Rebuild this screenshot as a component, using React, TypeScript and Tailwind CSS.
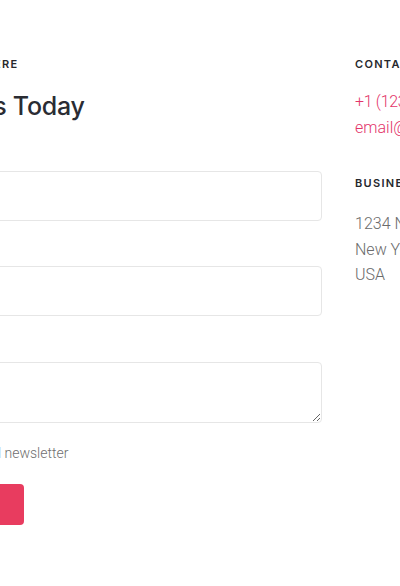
import React from "react";

export default function App() {
  const body = { fontFamily: 'Roboto, "Noto Sans", sans-serif' };
  const head = { fontFamily: 'Inter, "DejaVu Sans", sans-serif' };
  return (
    <div className="w-[400px] h-[586px] overflow-hidden bg-white" style={body}>
      <div className="flex ml-[-262px] pt-[57px] gap-[33px] w-[1000px]">
        {/* Left column */}
        <div className="w-[584px] shrink-0 flex flex-col">
          <div className="pl-[142px]">
            <div className="text-[11px] font-semibold tracking-[0.12em] text-[#26282d] leading-[14px]" style={head}>
              WE'RE ALWAYS HERE
            </div>
            <h2 className="mt-[20px] ml-[-4px] text-[25px] font-medium tracking-[-0.01em] text-[#2a2c33] leading-[30px]" style={head}>
              Contact Us Today
            </h2>
          </div>
          <label className="mt-[28px] pl-[142px] text-[14px] text-[#555] leading-[20px] h-[20px]">Name</label>
          <input className="mt-[2px] h-[50px] rounded-[4px] border border-[#e6e6e6] bg-white outline-none" />
          <label className="mt-[25px] pl-[142px] text-[14px] text-[#555] leading-[20px] h-[20px]">Email</label>
          <input className="mt-0 h-[50px] rounded-[4px] border border-[#e6e6e6] bg-white outline-none" />
          <label className="mt-[25px] pl-[142px] text-[14px] text-[#555] leading-[20px] h-[20px]">Message</label>
          <textarea className="mt-[1px] h-[61px] rounded-[4px] border border-[#e6e6e6] bg-white outline-none resize-y" />
          <div className="mt-[20px] pl-[105px] flex items-center gap-2 h-[20px]">
            <input type="checkbox" className="w-[13px] h-[13px]" />
            <span className="text-[14px] font-light text-[#6f6f6f] leading-[20px]">Subscribe to our email newsletter</span>
          </div>
          <div className="mt-[21px] pl-[136px]">
            <button className="h-[41px] w-[150px] rounded-[4px] bg-[#e83c5f] text-white text-[14px] font-semibold">
              Send Message
            </button>
          </div>
        </div>
        {/* Right column */}
        <div className="w-[300px] shrink-0 flex flex-col">
          <div className="text-[11px] font-semibold tracking-[0.12em] text-[#26282d] leading-[14px]" style={head}>
            CONTACT INFO
          </div>
          <div className="mt-[18px] text-[16px] font-light tracking-[-0.02em] text-[#e3356a] leading-[26px]">+1 (123) 456-7890</div>
          <div className="text-[16px] font-light text-[#e3356a] leading-[26px]">email@example.com</div>
          <div className="mt-[35px] text-[11px] font-semibold tracking-[0.12em] text-[#26282d] leading-[14px]" style={head}>
            BUSINESS ADDRESS
          </div>
          <div className="mt-[21px] text-[16px] font-light text-[#6b6b6b] leading-[25.5px]">
            <div>1234 North Avenue</div>
            <div>New York, NY 10001</div>
            <div>USA</div>
          </div>
        </div>
      </div>
    </div>
  );
}
